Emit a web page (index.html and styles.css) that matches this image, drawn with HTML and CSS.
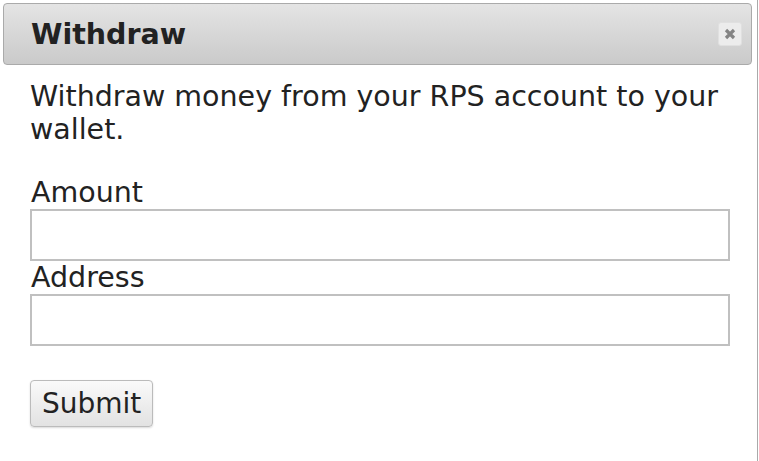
FILE: index.html
```html
<!DOCTYPE html>
<html lang="en">
<head>
  <meta charset="UTF-8" />
  <title>Withdraw</title>
  <link rel="stylesheet" href="styles.css">
</head>
<body>

<div class="dialog">
  <div class="titlebar">
    <span class="title">Withdraw</span>
    <button class="close" title="close">
      <svg width="12" height="12" viewBox="0 0 12 12">
        <path d="M2 2 L10 10 M10 2 L2 10" stroke="#848484" stroke-width="3.2" stroke-linecap="butt" />
      </svg>
    </button>
  </div>
  <div class="content">
    <p>Withdraw money from your RPS account to your wallet.</p>
    <form id="withdraw-form">
      <label for="amount">Amount</label>
      <input type="text" id="amount">
      <label for="address">Address</label>
      <input type="text" id="address">
      <button type="submit" class="submit">Submit</button>
    </form>
  </div>
</div>

</body>
</html>
```

FILE: styles.css
```css
html, body {
  margin: 0;
  background: #fff;
}
body {
  font-family: "DejaVu Sans", Verdana, sans-serif;
  color: #222;
}
.dialog {
  width: 751px;
  height: 455px;
  padding: 3px;
  border-right: 1px solid #aaa;
}
.titlebar {
  display: flex;
  align-items: center;
  justify-content: space-between;
  height: 60px;
  margin-right: 2px;
  padding: 0 9px 0 27px;
  border: 1px solid #aaa;
  border-radius: 4px;
  background: linear-gradient(#e4e4e4, #cacaca);
}
.title {
  font-weight: bold;
  font-size: 28.5px;
  color: #222;
}
.close {
  width: 24px;
  height: 24px;
  padding: 0;
  display: flex;
  align-items: center;
  justify-content: center;
  border: 1px solid #e0e0e0;
  border-radius: 3px;
  background: #ececec;
}
.content {
  padding: 15px 22px 0 27px;
  font-size: 28.5px;
}
.content p {
  margin: 0 0 30px;
}
label {
  display: block;
  padding-left: 1px;
}
input {
  display: block;
  box-sizing: border-box;
  width: 700px;
  height: 52px;
  margin: 0;
  border: 2px solid #c0c0c0;
  font-size: 28px;
  font-family: inherit;
}
.submit {
  margin-top: 34px;
  height: 47px;
  padding: 0 11px;
  font-family: inherit;
  font-size: 28px;
  color: #222;
  border: 1px solid #bbb;
  border-radius: 4px;
  background: linear-gradient(#fafafa, #e2e2e2);
  box-shadow: 0 1px 2px rgba(0,0,0,0.15);
}
```
